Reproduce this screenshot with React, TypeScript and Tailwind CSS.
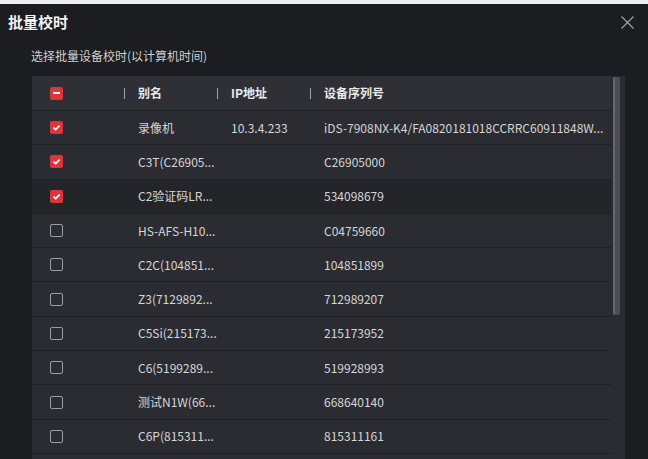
import React from 'react';

type Row = { name: string; ip: string; serial: string; checked: boolean; dark?: boolean };

const rows: Row[] = [
  { name: '录像机', ip: '10.3.4.233', serial: 'iDS-7908NX-K4/FA0820181018CCRRC60911848W...', checked: true },
  { name: 'C3T(C26905...', ip: '', serial: 'C26905000', checked: true },
  { name: 'C2验证码LR...', ip: '', serial: '534098679', checked: true, dark: true },
  { name: 'HS-AFS-H10...', ip: '', serial: 'C04759660', checked: false },
  { name: 'C2C(104851...', ip: '', serial: '104851899', checked: false },
  { name: 'Z3(7129892...', ip: '', serial: '712989207', checked: false },
  { name: 'C5Si(215173...', ip: '', serial: '215173952', checked: false },
  { name: 'C6(5199289...', ip: '', serial: '519928993', checked: false },
  { name: '测试N1W(66...', ip: '', serial: '668640140', checked: false },
  { name: 'C6P(815311...', ip: '', serial: '815311161', checked: false },
  { name: '', ip: '', serial: '', checked: false },
];

const Box: React.FC<{ state: 'on' | 'off' | 'some' }> = ({ state }) => {
  if (state === 'off') {
    return <div className="w-[13px] h-[13px] rounded-[2px] border border-[#9b9da1]" />;
  }
  return (
    <div className="w-[13px] h-[13px] rounded-[2px] bg-[#dc353d] flex items-center justify-center">
      {state === 'some' ? (
        <div className="w-[7px] h-[2px] bg-white" />
      ) : (
        <svg width="9" height="9" viewBox="0 0 9 9" fill="none">
          <path d="M1.5 4.6 L3.7 6.6 L7.6 2.6" stroke="white" strokeWidth="1.7" />
        </svg>
      )}
    </div>
  );
};

const HeadCell: React.FC<{ label: string }> = ({ label }) => (
  <div className="flex items-center">
    <div className="w-px h-[11px] bg-[#a0a2a6]" />
    <span className="ml-[13px]">{label}</span>
  </div>
);

export default function App() {
  return (
    <div
      className="w-[648px] h-[459px] bg-[#1b1d21] overflow-hidden"
      style={{ fontFamily: '"Noto Sans CJK SC", "Noto Sans", sans-serif' }}
    >
      <div className="h-[4px] bg-[#efefef]" />
      <div className="h-[36px] flex items-center justify-between pl-[8px] pr-[14px]">
        <span className="text-[15px] font-bold text-[#f2f2f2]">批量校时</span>
        <svg width="13" height="13" viewBox="0 0 13 13" fill="none">
          <path d="M0.5 0.5 L12.5 12.5 M12.5 0.5 L0.5 12.5" stroke="#a3a5a8" strokeWidth="1.1" />
        </svg>
      </div>
      <div className="h-[36px] pl-[31px] pt-[8px] text-[12px] leading-[16px] text-[#cfcfcf]">
        选择批量设备校时(以计算机时间)
      </div>
      <div className="ml-[32px] w-[593px] bg-[#2a2c32] flex">
        <div className="w-[579px]">
          <div className="h-[35px] bg-[#2e3036] border-b border-[#1e2024] grid grid-cols-[92px_93px_93px_1fr] items-center text-[12px] font-bold text-[#eaeaea]">
            <div className="pl-[18px]">
              <Box state="some" />
            </div>
            <HeadCell label="别名" />
            <HeadCell label="IP地址" />
            <HeadCell label="设备序列号" />
          </div>
          {rows.map((r, i) => (
            <div
              key={i}
              className={`h-[34.3px] border-b border-[#1e2024] grid grid-cols-[92px_93px_93px_1fr] items-center text-[12px] text-[#d6d6d6] whitespace-nowrap ${
                r.dark ? 'bg-[#232529]' : 'bg-[#2a2c32]'
              }`}
            >
              <div className="pl-[18px]">
                <Box state={r.checked ? 'on' : 'off'} />
              </div>
              <div className="pl-[14px] overflow-hidden">{r.name}</div>
              <div className="pl-[14px] overflow-hidden">{r.ip}</div>
              <div className="pl-[14px] overflow-hidden">{r.serial}</div>
            </div>
          ))}
        </div>
        <div className="w-[14px] pt-[1px] pl-[2px]">
          <div className="w-[7px] h-[238px] rounded-[2px] bg-[#4c4e53] border-l-2 border-[#66686c]" />
        </div>
      </div>
    </div>
  );
}
